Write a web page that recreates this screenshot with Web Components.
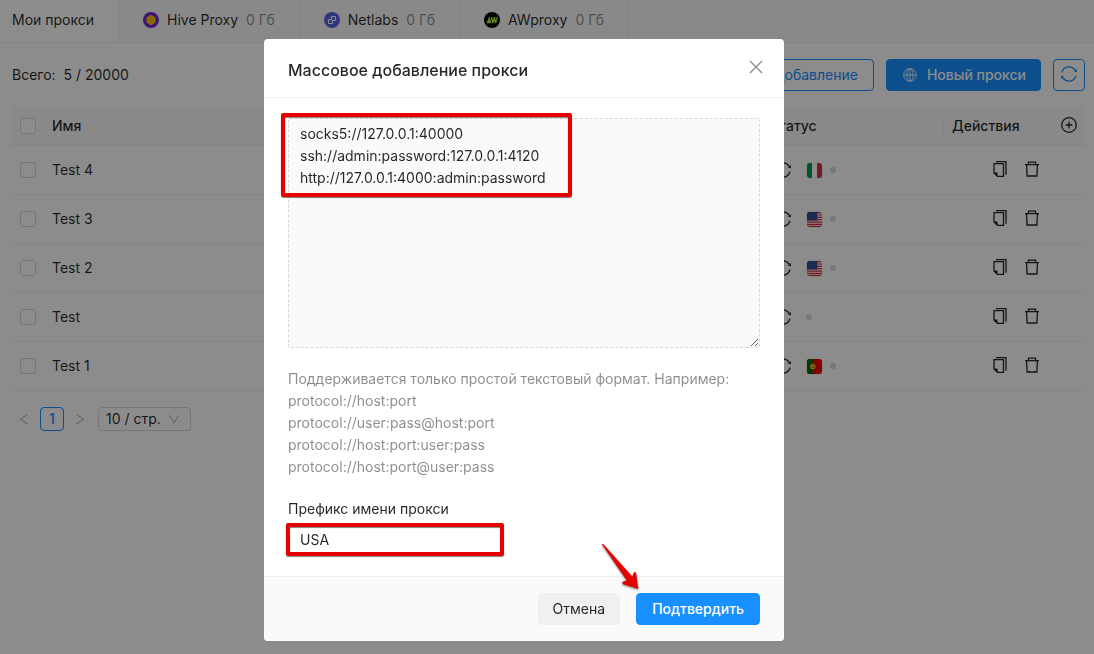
<!DOCTYPE html>
<html lang="ru">
<head>
<meta charset="utf-8">
<title>Мои прокси</title>
<style>
html, body { margin: 0; height: 100%; }
body {
  font: 14px/22px Inter, "Liberation Sans", sans-serif;
  color: rgba(0, 0, 0, .85);
  background: #fff;
  overflow: hidden;
}
</style>
</head>
<body>
<proxy-page></proxy-page>
<bulk-dialog></bulk-dialog>

<script>
const define = (name, html, setup) => {
  const template = document.createElement('template');
  template.innerHTML = html;
  customElements.define(name, class extends HTMLElement {
    constructor() {
      super();
      this.attachShadow({ mode: 'open' }).append(template.content.cloneNode(true));
    }
    connectedCallback() { if (setup) setup(this, this.shadowRoot); }
  });
};

const ICONS = {
  sync: `<g fill="none" stroke="currentColor" stroke-width="1.3"><path d="M1 6.3A7.2 7.2 0 0 1 14 4.1M15 9.700A7.200 7.200 0 0 1 2 11.900"/></g><path fill="currentColor" d="M15.900 3v3.300l-3.200-.7zM.1 13V9.700l3.200.7z"/>`,
  globe: `<g fill="none" stroke="currentColor"><circle cx="8" cy="8" r="7.2"/><ellipse cx="8" cy="8" rx="3.6" ry="7.2"/><path d="M.8 8h14.400M8 1v14"/></g>`,
  plus: `<g fill="none" stroke="currentColor" stroke-width="1.3"><circle cx="8" cy="8" r="7.3"/><path d="M8 4.6v6.8M4.6 8h6.8"/></g>`,
  copy: `<g fill="none" stroke="currentColor" stroke-width="1.3"><path d="M2 2.700h9.500v12.600H5.500L2 11.900z"/><path d="M4 .6h10v13.200"/></g><path fill="currentColor" d="M2 11.600h3.500v3.600z"/>`,
  trash: `<g fill="none" stroke="currentColor" stroke-width="1.3"><path d="M1 3.600h14M4.500 3.400V1.200h7v2.200M2.600 3.800l.5 11.200h9.800l.5-11.200"/></g>`,
  close: `<path fill="none" stroke="currentColor" stroke-width="1.4" d="M2 2l12 12M14 2 2 14"/>`,
  left: `<path fill="none" stroke="currentColor" stroke-width="1.5" d="M12.600 2.400 3.400 8.500l9.200 6.100"/>`,
  right: `<path fill="none" stroke="currentColor" stroke-width="1.5" d="m3.400 2.400 9.200 6.100-9.200 6.100"/>`,
  down: `<path fill="none" stroke="currentColor" stroke-width="1.5" d="m1.500 3 6.500 10L14.500 3"/>`,
  hive: `<circle cx="8" cy="8" r="8" fill="#6a28d9"/><path fill="#ffc000" d="m8 2.800 4.500 2.600v5.200L8 13.200l-4.500-2.600V5.400z"/>`,
  netlabs: `<circle cx="8" cy="8" r="8" fill="#5b63e8"/><g fill="none" stroke="#fff" stroke-width="1"><path d="M7.500 4.500h4v4h-4z"/><path d="M6.500 7.500h-2v4h4v-2"/></g>`,
  aw: `<circle cx="8" cy="8" r="8" fill="#000"/><path fill="#b6f23c" d="M2.400 11.200 5.300 4.500l2.200 6.700zM6.500 5h1.700l.8 3.200.9-3.200h1.200l.7 3.200 1-3.200h1.200l-1.700 6.200h-1.300l-.7-2.600-.8 2.600H8.200z"/>`,
  it: `<path fill="#fff" d="M0 0h16v16H0z"/><path fill="#009a49" d="M0 0h5.300v16H0z"/><path fill="#d9303e" d="M10.700 0H16v16h-5.300z"/>`,
  us: `<path fill="#fff" d="M0 0h16v16H0z"/><path stroke="#d8293f" stroke-width="1.3" d="M0 .7h16M0 3.200h16M0 5.700h16M0 8.200h16M0 10.700h16M0 13.100h16M0 15.400h16"/><path fill="#2b4590" d="M0 0h11v9H0z"/><path stroke="#9aa8d0" stroke-width=".6" stroke-dasharray=".8 1.7" d="M1 1.500h9.500M2 3.500h8.500M1 5.500h9.500M2 7.500h8.500"/>`,
  pt: `<path fill="#f00000" d="M0 0h16v16H0z"/><path fill="#046a08" d="M0 0h6.200v16H0z"/><circle cx="6.200" cy="8" r="3" fill="#e8c020"/><circle cx="6.200" cy="8" r="1.600" fill="#e33"/><circle cx="6.200" cy="8" r=".8" fill="#fff"/>`
};

define('ui-icon', `
<style>
:host { display: block; flex: none; width: 16px; height: 16px; }
svg { display: block; width: 100%; height: 100%; }
</style>
<svg viewBox="0 0 16 16" aria-hidden="true"></svg>`,
(el, root) => { root.querySelector('svg').innerHTML = ICONS[el.getAttribute('name')]; });

define('ui-button', `
<style>
:host { display: block; flex: none; }
button {
  display: flex; align-items: center; justify-content: center; gap: 8px;
  box-sizing: border-box; height: 32px; padding: 0 14px; margin: 0;
  font: inherit; color: #1890ff; background: #fff;
  border: 1px solid #1890ff; border-radius: 4px; cursor: pointer; white-space: nowrap;
}
:host([kind="primary"]) button { color: #fff; background: #1890ff; font-weight: 500; }
:host([kind="plain"]) button { color: rgba(0, 0, 0, .85); background: #f0f0f0; border-color: #f0f0f0; }
:host([wide]) button { padding: 0 15px; }
:host([square]) button { width: 32px; padding: 0 0 2px; }
</style>
<button type="button"><slot></slot></button>`,
(el, root) => {
  if (el.hasAttribute('label')) root.querySelector('button').setAttribute('aria-label', el.getAttribute('label'));
});

define('proxy-tab', `
<style>
:host { display: block; border-right: 1px solid #f0f0f0; }
a { display: flex; align-items: center; gap: 8px; height: 40px; padding: 0 24px; color: inherit; text-decoration: none; white-space: nowrap; }
:host([active]) { background: #fff; }
:host([active]) a { padding-left: 12px; }
slot[name="size"] { color: rgba(0, 0, 0, .45); }
</style>
<a href="#"><slot name="icon"></slot><slot></slot><slot name="size"></slot></a>`);

define('status-cell', `
<style>
:host { display: flex; align-items: center; gap: 8px; height: 16px; margin-left: 6px; }
.sync { padding-bottom: 1px; }
.flag { width: 15px; height: 15px; margin-left: 8px; border-radius: 3px; overflow: hidden; box-shadow: 0 0 1px rgba(0, 0, 0, .5); }
i { width: 6px; height: 6px; border-radius: 50%; background: #d9d9d9; }
.sync + i { margin-left: 7px; }
</style>
<ui-icon class="sync" name="sync"></ui-icon>`,
(el, root) => {
  const flag = el.getAttribute('flag');
  root.innerHTML += (flag ? `<ui-icon class="flag" name="${flag}"></ui-icon>` : '') + '<i></i>';
});

define('proxy-table', `
<style>
:host { display: block; }
table { width: 100%; table-layout: fixed; border-collapse: separate; border-spacing: 0; }
col.pick, col.add { width: 32px; }
col.status { width: 183px; }
col.actions { width: 109px; }
th, td { box-sizing: border-box; padding: 0 8px; text-align: left; border-bottom: 1px solid #f0f0f0; }
th { height: 39px; font-weight: 500; background: #fafafa; }
th:first-child { border-top-left-radius: 4px; }
th:last-child { border-top-right-radius: 4px; }
th.status { background: linear-gradient(#f0f0f0, #f0f0f0) right center / 1px 22px no-repeat #fafafa; }
td { height: 49px; }
input {
  appearance: none; display: block; box-sizing: border-box; width: 16px; height: 16px; margin: 0;
  background: #fff; border: 1px solid #d9d9d9; border-radius: 3px;
}
.tools { display: flex; justify-content: flex-end; gap: 16px; padding: 0 5px 2px 0; }
button { display: block; margin: 0; padding: 0; border: 0; background: none; color: inherit; cursor: pointer; }
th button { padding-bottom: 2px; }
</style>
<table>
  <colgroup><col class="pick"><col><col class="status"><col class="actions"><col class="add"></colgroup>
  <thead><tr>
    <th><input type="checkbox" aria-label="Выбрать все"></th>
    <th>Имя</th><th class="status">Статус</th><th>Действия</th>
    <th><button type="button" aria-label="Добавить столбец"><ui-icon name="plus"></ui-icon></button></th>
  </tr></thead>
  <tbody></tbody>
</table>`,
(el, root) => {
  const rows = [['Test 4', 'it'], ['Test 3', 'us'], ['Test 2', 'us'], ['Test', ''], ['Test 1', 'pt']];
  root.querySelector('tbody').innerHTML = rows.map(([name, flag]) => `
    <tr>
      <td><input type="checkbox" aria-label="Выбрать ${name}"></td>
      <td>${name}</td>
      <td><status-cell flag="${flag}"></status-cell></td>
      <td><div class="tools">
        <button type="button" aria-label="Копировать"><ui-icon name="copy"></ui-icon></button>
        <button type="button" aria-label="Удалить"><ui-icon name="trash"></ui-icon></button>
      </div></td>
      <td></td>
    </tr>`).join('');
});

define('page-nav', `
<style>
:host { display: flex; align-items: center; height: 24px; }
button {
  display: flex; align-items: center; justify-content: center; box-sizing: border-box;
  width: 24px; height: 24px; margin: 0 4px 0 0; padding: 0; font: inherit;
  background: none; border: 0; color: rgba(0, 0, 0, .25);
}
button ui-icon { width: 12px; height: 12px; }
.current { color: #1890ff; background: #fff; border: 1px solid #1890ff; border-radius: 4px; font-weight: 500; }
.size { display: grid; align-items: center; margin-left: 2px; }
.size > * { grid-area: 1 / 1; }
.size ui-icon { width: 12px; height: 12px; justify-self: end; margin-right: 11px; color: rgba(0, 0, 0, .25); pointer-events: none; }
select {
  appearance: none; box-sizing: border-box; width: 93px; height: 24px; margin: 0; padding: 0 7px;
  font: inherit; line-height: 22px; color: inherit; background: #fff; border: 1px solid #d9d9d9; border-radius: 4px;
}
</style>
<button type="button" aria-label="Назад"><ui-icon name="left"></ui-icon></button>
<button type="button" class="current">1</button>
<button type="button" aria-label="Вперёд"><ui-icon name="right"></ui-icon></button>
<div class="size"><select aria-label="Строк на странице"><option>10 / стр.</option></select><ui-icon name="down"></ui-icon></div>`);

define('proxy-page', `
<style>
:host { display: block; }
nav { display: flex; padding-bottom: 2px; background: #fafafa; border-bottom: 1px solid #f0f0f0; }
proxy-tab { padding-bottom: 2px; margin-bottom: -2px; }
main { padding: 16px 9px 0 12px; }
.bar { display: flex; align-items: center; gap: 12px; margin-bottom: 16px; }
.total { flex: 1; white-space: pre; }
.globe { width: 14px; height: 14px; margin: 0 2px; }
page-nav { margin-top: 16px; }
</style>
<nav>
  <proxy-tab active>Мои прокси</proxy-tab>
  <proxy-tab><ui-icon slot="icon" name="hive"></ui-icon>Hive Proxy<span slot="size">0 Гб</span></proxy-tab>
  <proxy-tab><ui-icon slot="icon" name="netlabs"></ui-icon>Netlabs<span slot="size">0 Гб</span></proxy-tab>
  <proxy-tab><ui-icon slot="icon" name="aw"></ui-icon>AWproxy<span slot="size">0 Гб</span></proxy-tab>
</nav>
<main>
  <div class="bar">
    <div class="total">Всего:  5 / 20000</div>
    <ui-button wide>Массовое добавление</ui-button>
    <ui-button kind="primary"><ui-icon class="globe" name="globe"></ui-icon>Новый прокси</ui-button>
    <ui-button square label="Обновить"><ui-icon name="sync"></ui-icon></ui-button>
  </div>
  <proxy-table></proxy-table>
  <page-nav></page-nav>
</main>`);

define('mark-box', `
<style>
:host { display: block; position: relative; }
.frame {
  position: absolute; inset: var(--mark-inset); box-sizing: border-box; pointer-events: none;
  width: var(--mark-width); height: var(--mark-height);
  border: 4px solid #e60000; border-radius: 2px;
  box-shadow: 0 1px 1px rgba(0, 0, 0, .5), inset 0 1px 1px rgba(0, 0, 0, .5);
}
</style>
<slot></slot><div class="frame"></div>`);

define('mark-arrow', `
<style>
:host { display: block; width: 38px; height: 47px; pointer-events: none; }
svg { display: block; overflow: visible; filter: drop-shadow(0 1px 1px rgba(0, 0, 0, .5)); }
</style>
<svg width="38" height="47" viewBox="0 0 38 47" aria-hidden="true">
  <path fill="#e60000" d="M.8 1.200 2 .8 31.300 33.400 33 29.400q1-1 2 0L37.300 46 22 41.300q-1.500-1.500 0-2.800l3.800-.9z"/>
</svg>`);

define('bulk-dialog', `
<style>
:host {
  position: fixed; inset: 0; display: flex; justify-content: center; align-items: flex-start;
  padding: 39px 46px 0 0; background: rgba(0, 0, 0, .45);
}
section { width: 520px; max-width: 100%; background: #fff; border-radius: 4px; overflow: hidden; }
header { display: flex; justify-content: space-between; align-items: center; padding: 16px 20px 16px 24px; border-bottom: 1px solid #f0f0f0; }
h2 { margin: 0; padding-top: 4px; font-size: 16px; line-height: 22px; font-weight: 500; }
.close { display: block; margin: 0; padding: 0 0 2px; border: 0; background: none; color: rgba(0, 0, 0, .45); }
.body { padding: 20px 24px; }
textarea, input { display: block; box-sizing: border-box; margin: 0; font: inherit; color: inherit; border: 1px solid #d9d9d9; border-radius: 2px; padding: 4px 11px; outline: 0; }
textarea { width: 100%; height: 230px; background: #fafafa; border-style: dashed; resize: both; }
input { width: 216px; height: 32px; padding: 3px 11px 5px; }
.hint { margin: 20px 0; color: rgba(0, 0, 0, .45); }
label { display: block; margin-bottom: 4px; }
.list { --mark-inset: -5px auto auto -7px; --mark-width: 291px; --mark-height: 84px; }
.prefix { --mark-inset: -1px auto auto -2px; --mark-width: 218px; --mark-height: 33px; }
footer { display: flex; justify-content: flex-end; gap: 16px; padding: 16px 24px; background: #fafafa; border-top: 1px solid #f0f0f0; }
.confirm { position: relative; }
mark-arrow { position: absolute; right: 121px; bottom: 35px; }
</style>
<section role="dialog" aria-labelledby="title">
  <header>
    <h2 id="title">Массовое добавление прокси</h2>
    <button type="button" class="close" aria-label="Закрыть"><ui-icon name="close"></ui-icon></button>
  </header>
  <div class="body">
    <mark-box class="list"><textarea aria-label="Список прокси" spellcheck="false">socks5://127.0.0.1:40000
ssh://admin:password:127.0.0.1:4120
http://127.0.0.1:4000:admin:password</textarea></mark-box>
    <div class="hint">Поддерживается только простой текстовый формат. Например:<br>protocol://host:port<br>protocol://user:pass@host:port<br>protocol://host:port:user:pass<br>protocol://host:port@user:pass</div>
    <label for="prefix">Префикс имени прокси</label>
    <mark-box class="prefix"><input id="prefix" type="text" value="USA"></mark-box>
  </div>
  <footer>
    <ui-button kind="plain">Отмена</ui-button>
    <div class="confirm"><ui-button kind="primary" wide>Подтвердить</ui-button><mark-arrow></mark-arrow></div>
  </footer>
</section>`);
</script>
</body>
</html>
